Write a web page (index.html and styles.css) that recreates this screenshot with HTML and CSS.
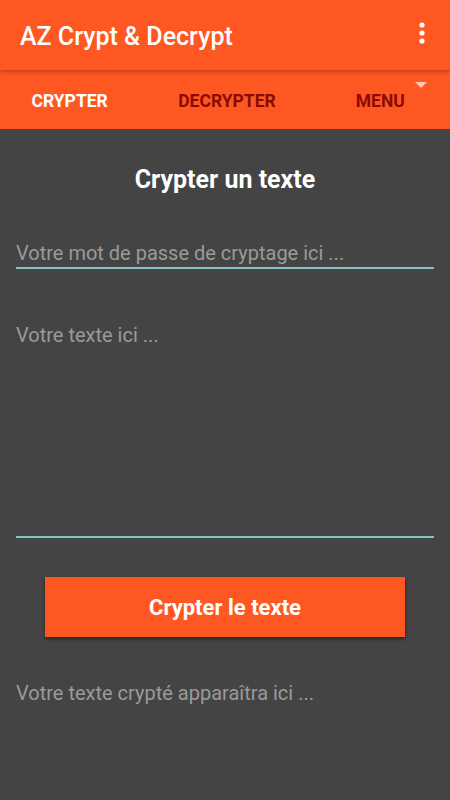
FILE: index.html
```html
<!DOCTYPE html>
<html lang="fr">
<head>
  <meta charset="UTF-8">
  <meta name="viewport" content="width=device-width, initial-scale=1.0">
  <title>AZ Crypt & Decrypt</title>
  <link rel="stylesheet" href="styles.css">
</head>
<body>
  <header class="toolbar">
    <span class="app-title">AZ Crypt &amp; Decrypt</span>
    <svg class="overflow" width="8" height="22" viewBox="0 0 8 22">
      <circle cx="4" cy="3" r="2.6" fill="#fff"/>
      <circle cx="4" cy="11" r="2.6" fill="#fff"/>
      <circle cx="4" cy="19" r="2.6" fill="#fff"/>
    </svg>
  </header>

  <nav class="tabs">
    <div class="tab active">CRYPTER</div>
    <div class="tab">DECRYPTER</div>
    <div class="tab menu">MENU<span class="caret"></span></div>
  </nav>

  <main class="content">
    <h1>Crypter un texte</h1>

    <div class="field">Votre mot de passe de cryptage ici ...</div>
    <div class="field area">Votre texte ici ...</div>

    <button class="action">Crypter le texte</button>

    <p class="output">Votre texte crypté apparaîtra ici ...</p>
  </main>
</body>
</html>
```

FILE: styles.css
```css
body {
  margin: 0;
  font-family: Roboto, "Liberation Sans", sans-serif;
  background: #444444;
  color: #fff;
  height: 800px;
  overflow: hidden;
}
.toolbar {
  height: 70px;
  background: #ff5722;
  display: flex;
  align-items: center;
  justify-content: space-between;
  padding: 0 24px 0 20px;
  position: relative;
  z-index: 2;
  box-shadow: 0 2px 4px rgba(0,0,0,0.25);
}
.app-title {
  font-size: 25px;
  font-weight: 500;
  margin-top: 2px;
}
.overflow {
  margin-top: -4px;
}
.tabs {
  height: 59px;
  background: #ff5722;
  display: flex;
  align-items: center;
  border-bottom: 1px solid #2f4f4f;
}
.tab {
  flex: 1;
  text-align: center;
  font-size: 17.5px;
  font-weight: 700;
  color: #8b0a00;
  padding-top: 2px;
}
.tab.active {
  color: #fff;
  padding-right: 18px;
}
.tab.menu {
  position: relative;
  padding-left: 14px;
}
.caret {
  position: absolute;
  top: -7px;
  right: 23px;
  border-left: 6px solid transparent;
  border-right: 6px solid transparent;
  border-top: 6px solid #ffc7b5;
}
.content {
  padding: 0 16px;
}
h1 {
  margin: 35px 0 46px;
  text-align: center;
  font-size: 25px;
  line-height: 30px;
  font-weight: 700;
}
.field {
  font-size: 20px;
  line-height: 24px;
  color: #9a9a9a;
  padding-bottom: 2px;
  border-bottom: 2px solid #7fc7c0;
}
.area {
  margin-top: 54px;
  height: 211px;
}
.action {
  display: block;
  width: 360px;
  height: 60px;
  margin: 39px auto 0;
  border: none;
  background: #ff5722;
  color: #fff;
  font-family: Roboto, "Liberation Sans", sans-serif;
  font-size: 22px;
  font-weight: 700;
  box-shadow: 0 2px 3px rgba(0,0,0,0.45);
}
.output {
  margin: 44px 0 0;
  font-size: 20px;
  line-height: 24px;
  color: #9a9a9a;
}
```
